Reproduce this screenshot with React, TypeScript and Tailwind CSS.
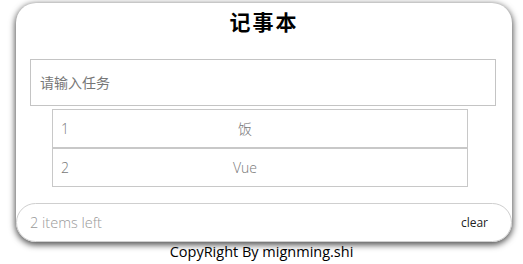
import React from "react";

const font = { fontFamily: '"Open Sans", "Noto Sans CJK SC", sans-serif' };

export default function App() {
  const items = [
    { id: 1, text: "饭" },
    { id: 2, text: "Vue" },
  ];
  return (
    <div className="w-[523px] h-[264px] bg-white overflow-hidden" style={font}>
      <div className="pt-[3px]">
        <div className="ml-[16px] w-[496px] h-[239px] rounded-[20px] bg-white shadow-[0_2px_6px_1px_#555] flex flex-col">
          <div className="h-[38px] flex items-center justify-center text-[21px] font-bold text-black tracking-[2px] pt-[2px]">
            记事本
          </div>
          <div className="mt-[18px] ml-[14px] w-[466px] h-[47px] border border-[#c4c4c4] flex items-center pl-[9px] text-[14px] text-[#777]">
            请输入任务
          </div>
          <div className="mt-[3px] ml-[36px] w-[416px] flex flex-col">
            {items.map((it) => (
              <div
                key={it.id}
                className="h-[39px] border border-[#c8c8c8] flex items-center text-[14px] text-[#777] font-light"
              >
                <span className="pl-[8px] w-[150px]">{it.id}</span>
                <span className="w-[84px] text-center">{it.text}</span>
              </div>
            ))}
          </div>
          <div className="mt-auto h-[39px] rounded-[20px] border border-[#cfcfcf] flex items-center justify-between pl-[13px] pr-[23px]">
            <span className="text-[14.5px] text-[#999] font-light">2 items left</span>
            <span className="text-[12px] text-[#222]">clear</span>
          </div>
        </div>
        <div className="h-[20px] flex items-center justify-center text-[14.5px] text-black">
          CopyRight By mignming.shi
        </div>
      </div>
    </div>
  );
}
